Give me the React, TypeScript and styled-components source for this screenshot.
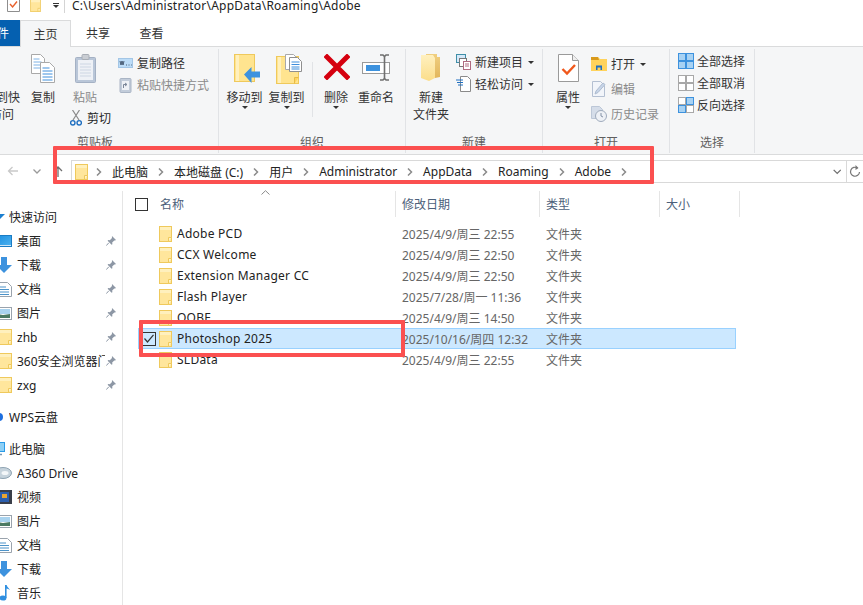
import React from "react";
import styled, { createGlobalStyle } from "styled-components";

const FONT = `"Noto Sans", "Noto Sans CJK SC", sans-serif`;

const GlobalStyle = createGlobalStyle`
  html, body {
    margin: 0;
    padding: 0;
    background: #fff;
  }
  body {
    font-family: ${FONT};
    font-size: 12px;
    color: #1f1f1f;
  }
`;

/* icons */

const FolderIcon = ({ w = 13, h = 16 }: { w?: number; h?: number }) => (
  <svg width={w} height={h} viewBox="0 0 13 16">
    <rect x="0.5" y="0.5" width="12" height="15" fill="#ffe69c" stroke="#efc95c" />
    <rect x="1" y="1" width="11" height="3" fill="#fff0bd" />
    <path d="M9.5 15.5v-4h3" fill="#fff3c9" stroke="#efc95c" />
  </svg>
);

const QuickCheck = () => (
  <svg width="14" height="13" viewBox="0 0 14 13">
    <path d="M0.5 0v12.5h12V0" fill="#fff" stroke="#8e8e8e" />
    <path d="M3 5l2.6 3L10 2.5" fill="none" stroke="#e8602c" strokeWidth="1.4" />
  </svg>
);

const DocCopy = () => (
  <svg width="24" height="29" viewBox="0 0 24 29">
    <path d="M0.5 0.5h9l4 4v15h-13z" fill="#fff" stroke="#a9a9a9" />
    <path d="M2.5 5h6M2.5 8h8M2.5 11h8M2.5 14h8" stroke="#7fb2e5" />
    <path d="M9.5 8.5h9l5 5v15h-14z" fill="#fff" stroke="#a9a9a9" />
    <path d="M11.5 14h7M11.5 17h10M11.5 20h10M11.5 23h10M11.5 26h10" stroke="#3f8fdc" />
  </svg>
);

const PasteIcon = () => (
  <svg width="21" height="29" viewBox="0 0 21 29">
    <rect x="0.5" y="3.5" width="20" height="25" rx="1" fill="#b9c6d8" stroke="#a4b1c4" />
    <rect x="3" y="6" width="15" height="20" fill="#eef1f6" />
    <path d="M5 10h11M5 13h11M5 16h11M5 19h11M5 22h11" stroke="#cdd6e3" />
    <rect x="7" y="0.5" width="7" height="5" rx="1" fill="#c9cdd3" stroke="#a8adb5" />
  </svg>
);

const ScissorsIcon = () => (
  <svg width="12" height="16" viewBox="0 0 12 16">
    <path d="M3 10L9.5 0M9 10L2.5 0" stroke="#8a8a8a" strokeWidth="1.2" fill="none" />
    <circle cx="2.8" cy="12.8" r="2.2" fill="none" stroke="#1f6fc0" strokeWidth="1.4" />
    <circle cx="9.2" cy="12.8" r="2.2" fill="none" stroke="#1f6fc0" strokeWidth="1.4" />
  </svg>
);

const CopyPathIcon = () => (
  <svg width="15" height="10" viewBox="0 0 15 10">
    <rect x="0.5" y="0.5" width="14" height="9" fill="#bcdcf7" stroke="#a3c6e6" />
    <path d="M2 3l1 4 1-4 1 4 1-4M8 7h1M10.5 7h1M13 7h0.8" stroke="#2c3e55" fill="none" strokeWidth="0.8" />
  </svg>
);

const ShortcutIcon = () => (
  <svg width="12" height="16" viewBox="0 0 12 16">
    <rect x="0.5" y="1.5" width="11" height="14" rx="1" fill="#c2ccda" stroke="#aab5c5" />
    <rect x="2.5" y="4" width="7" height="9" fill="#eef1f6" />
    <path d="M4 11V7.5h3M5.5 6l2 1.5-2 1.5" stroke="#7a8699" fill="none" />
  </svg>
);

const MoveToIcon = () => (
  <svg width="26" height="29" viewBox="0 0 26 29">
    <rect x="0.5" y="0.5" width="20" height="27" fill="#ffe48f" stroke="#efc95c" />
    <rect x="2" y="1" width="3" height="26" fill="#fff0bd" />
    <path d="M10 20.5L17.5 13v4.5H26v6h-8.500V29z" fill="#3d92de" />
  </svg>
);

const CopyToIcon = () => (
  <svg width="26" height="30" viewBox="0 0 26 30">
    <rect x="0.5" y="2.5" width="22" height="27" fill="#ffe48f" stroke="#efc95c" />
    <rect x="2" y="3" width="3" height="26" fill="#fff0bd" />
    <path d="M18.5 29.500v-6h4" fill="#ffd45e" stroke="#e8bb45" />
    <path d="M9.500 0.500h8l3 3v12h-11z" fill="#fff" stroke="#a9a9a9" />
    <path d="M13.500 3.500h8l4 4v10h-12z" fill="#fff" stroke="#8f8f8f" />
    <path d="M15.500 8h8M15.500 10.500h8M15.500 13h8M15.500 15h8" stroke="#3f8fdc" />
  </svg>
);

const DeleteIcon = () => (
  <svg width="26" height="26" viewBox="0 0 26 26">
    <path d="M3 3l20 20M23 3L3 23" stroke="#d5000f" strokeWidth="5" strokeLinecap="square" />
  </svg>
);

const RenameIcon = () => (
  <svg width="29" height="27" viewBox="0 0 29 27">
    <rect x="0.5" y="8.5" width="27" height="11" fill="#fff" stroke="#9a9a9a" />
    <rect x="4" y="11" width="14" height="6" fill="#3d92de" />
    <path d="M18 1h3l1.500 1.500L24 1h3M22.500 2v23M18 26h3l1.500-1.500L24 26h3" fill="none" stroke="#6f6f6f" strokeWidth="1.6" />
  </svg>
);

const NewFolderIcon = () => (
  <svg width="20" height="27" viewBox="0 0 20 27">
    <defs>
      <linearGradient id="newFolderFront" x1="0" y1="0" x2="0" y2="1">
        <stop offset="0" stopColor="#fff0bf" />
        <stop offset="1" stopColor="#fbdd8a" />
      </linearGradient>
      <linearGradient id="newFolderBack" x1="0" y1="0" x2="0" y2="1">
        <stop offset="0" stopColor="#f0cf80" />
        <stop offset="1" stopColor="#e2b65c" />
      </linearGradient>
    </defs>
    <path d="M5 0h11v3h3v20l-5 1H5z" fill="url(#newFolderBack)" />
    <path d="M0 1h12l2 3v20l-6 3-8-3z" fill="url(#newFolderFront)" />
  </svg>
);

const NewItemIcon = () => (
  <svg width="15" height="16" viewBox="0 0 15 16">
    <rect x="0.5" y="0.5" width="9" height="8" fill="#d5e8f8" stroke="#3f8fa8" />
    <rect x="3.500" y="4.500" width="7" height="8" fill="#fff" stroke="#777" />
    <rect x="7.500" y="7.500" width="7" height="8" fill="#fff" stroke="#b06a80" />
    <path d="M9 10h4M9 12h4" stroke="#b06a80" />
  </svg>
);

const EasyAccessIcon = () => (
  <svg width="15" height="16" viewBox="0 0 15 16">
    <path d="M4.500 0.500h7l3 3v12h-10z" fill="#fff" stroke="#8a8a8a" />
    <path d="M0 4h7M1 6.500h6M2 9h5" stroke="#1f6fc0" />
  </svg>
);

const PropertiesIcon = () => (
  <svg width="21" height="28" viewBox="0 0 21 28">
    <path d="M0.500 0.500h14l6 6v21h-20z" fill="#fff" stroke="#9a9a9a" />
    <path d="M14.500 0.500v6h6" fill="#eee" stroke="#9a9a9a" />
    <path d="M4.500 15l4.500 4.500L17 11" fill="none" stroke="#f0581c" strokeWidth="2.4" />
  </svg>
);

const OpenIcon = () => (
  <svg width="16" height="14" viewBox="0 0 16 14">
    <path d="M0 0h7l2 2h7v12H0z" fill="#ffd35c" />
    <path d="M0 0h7l1 3H0z" fill="#d99a1c" />
    <path d="M5 13V8.500h6V13H9.500v-2.500h-3V13z" fill="#1f6fc0" />
  </svg>
);

const EditIcon = () => (
  <svg width="14" height="16" viewBox="0 0 14 16">
    <path d="M0.500 0.500h8l4 4v11H0.500z" fill="#f2f5fa" stroke="#b4c0d2" />
    <path d="M3 13l1-3 7-8 2 1.500-7 8z" fill="#c7d5e8" stroke="#aebcd0" />
  </svg>
);

const HistoryIcon = () => (
  <svg width="16" height="16" viewBox="0 0 16 16">
    <path d="M0.500 0.500h8l3 3v9H0.500z" fill="#d5dde9" stroke="#bcc7d7" />
    <circle cx="10" cy="10" r="5.500" fill="#eef1f6" stroke="#9fabbc" />
    <path d="M10 7v3l2 1" fill="none" stroke="#8492a6" />
  </svg>
);

const GridIcon = ({ on }: { on: boolean[] }) => (
  <svg width="16" height="16" viewBox="0 0 16 16">
    {[0, 1, 2, 3].map((i) => (
      <rect
        key={i}
        x={i % 2 === 0 ? 0.5 : 8.5}
        y={i < 2 ? 0.5 : 8.5}
        width="7"
        height="7"
        fill={on[i] ? "#a8d2f3" : "#fff"}
        stroke={on[i] ? "#3d92de" : "#a8a8a8"}
      />
    ))}
  </svg>
);

const Pin = () => (
  <svg width="10" height="10" viewBox="0 0 10 10">
    <path d="M6 0l4 4-1 .6-.7-.2L6.200 6.600l.2 1.600-.8.6-4-4 .7-.8 1.500.2 2.200-2.200-.1-.8z" fill="#8d97a5" />
    <path d="M2.800 6.800L0.300 9.600" stroke="#8d97a5" />
  </svg>
);

const CrumbArrow = () => (
  <svg width="6" height="8" viewBox="0 0 6 8">
    <path d="M1 0.500L4.500 4 1 7.500" fill="none" stroke="#8a8a8a" strokeWidth="1.5" />
  </svg>
);

const Caret = () => (
  <svg width="6" height="3" viewBox="0 0 6 3">
    <path d="M0 0h6L3 3z" fill="#333" />
  </svg>
);

const DesktopIcon = () => (
  <svg width="16" height="12" viewBox="0 0 16 12">
    <defs>
      <linearGradient id="desktopFill" x1="0" y1="0" x2="1" y2="1">
        <stop offset="0" stopColor="#1b8ee0" />
        <stop offset="1" stopColor="#4fb4f0" />
      </linearGradient>
    </defs>
    <rect x="0.500" y="0.500" width="15" height="11" fill="url(#desktopFill)" stroke="#1a7cc4" />
    <path d="M1 10.500h14" stroke="#cfe6f7" />
  </svg>
);

const DownloadIcon = () => (
  <svg width="16" height="16" viewBox="0 0 16 16">
    <path d="M5 0h6v8h5l-8 8-8-8h5z" fill="#3d92de" />
  </svg>
);

const DocsIcon = () => (
  <svg width="16" height="15" viewBox="0 0 16 15">
    <path d="M0.500 0.500h11l4 4v10H0.500z" fill="#fff" stroke="#9aa3ad" />
    <path d="M3 5h7M3 7.500h10M3 10h10M3 12.500h10" stroke="#4c93c9" />
  </svg>
);

const PicturesIcon = () => (
  <svg width="16" height="13" viewBox="0 0 16 13">
    <rect x="0.500" y="0.500" width="15" height="12" fill="#fff" stroke="#9aa3ad" />
    <rect x="2" y="2" width="12" height="5" fill="#a9d3ef" />
    <path d="M2 7l5 1 7-1v4H2z" fill="#4b7a63" />
  </svg>
);

const VideoIcon = () => (
  <svg width="16" height="14" viewBox="0 0 16 14">
    <rect width="16" height="14" fill="#3a3f4a" />
    <rect x="3" y="2" width="10" height="10" fill="#2c5fae" />
    <rect x="6" y="4" width="5" height="4" fill="#e9a531" />
  </svg>
);

const MusicIcon = () => (
  <svg width="16" height="16" viewBox="0 0 16 16">
    <path d="M9 0h1.600c.3 2 2.400 3 3.400 5-1.200-1-2.600-1.500-3.400-1.600V13H9z" fill="#2f8fe0" />
    <ellipse cx="7" cy="13" rx="3.400" ry="2.600" fill="#2f8fe0" />
  </svg>
);

const DriveIcon = () => (
  <svg width="18" height="14" viewBox="0 0 18 14">
    <ellipse cx="9" cy="7" rx="8.500" ry="5.500" fill="#c6d3dc" stroke="#8ea3b2" />
    <ellipse cx="11" cy="7" rx="3.500" ry="2" fill="#f4f7f9" />
  </svg>
);

const QuickMark = () => (
  <svg width="10" height="6" viewBox="0 0 10 6">
    <path d="M0 0h10L5 5z" fill="#1b7fd0" />
  </svg>
);

const WpsDot = () => (
  <svg width="12" height="12" viewBox="0 0 12 12">
    <circle cx="6" cy="6" r="4" fill="#1e6fe0" />
  </svg>
);

const PcIcon = () => (
  <svg width="14" height="14" viewBox="0 0 14 14">
    <rect x="0.500" y="0.500" width="13" height="9" fill="#8fd0f5" stroke="#2a9be8" />
    <path d="M3 12.500h8" stroke="#7a9ab5" strokeWidth="1.5" />
  </svg>
);

/* title bar */

const Window = styled.div`
  width: 863px;
  height: 605px;
  overflow: hidden;
  display: flex;
  flex-direction: column;
  background: #fff;
`;

const TitleBar = styled.div`
  height: 20px;
  flex: none;
  overflow: hidden;
`;

const TitleInner = styled.div`
  margin-top: -1px;
  height: 13px;
  display: flex;
  align-items: center;
  padding-left: 7px;
`;

const TitleCaret = styled.span`
  margin-left: 10px;
  width: 8px;
  display: flex;
  flex-direction: column;
  align-items: center;
  gap: 1px;

  &::before {
    content: "";
    width: 6px;
    height: 1px;
    background: #333;
  }
`;

const TitleSep = styled.span`
  width: 1px;
  height: 14px;
  margin: 0 7px 0 4px;
  background: #d4d4d4;
`;

const TitleFolderSlot = styled.span`
  display: flex;
  margin-left: 8px;
`;

const PathText = styled.span`
  font-size: 12px;
  line-height: 13px;
  letter-spacing: 0.22px;
  color: #222;
`;

/* tabs */

const TabBar = styled.div`
  height: 27px;
  flex: none;
  display: flex;
  box-sizing: border-box;
  border-bottom: 1px solid #dadbdc;
`;

const FileTab = styled.div`
  width: 20px;
  height: 26px;
  box-sizing: border-box;
  padding-right: 11px;
  background: #0560b0;
  color: #fff;
  display: flex;
  align-items: center;
  justify-content: flex-end;
  overflow: hidden;
  white-space: nowrap;
`;

const Tab = styled.div<{ $active?: boolean; $w: number }>`
  width: ${(p) => p.$w}px;
  height: 26px;
  box-sizing: border-box;
  display: flex;
  align-items: center;
  justify-content: center;
  font-size: 12px;
  color: #333;
  ${(p) =>
    p.$active
      ? `
    height: 27px;
    background: #f5f6f7;
    border: 1px solid #dadbdc;
    border-bottom: none;
  `
      : ""}
`;

/* ribbon */

const Ribbon = styled.div`
  height: 108px;
  flex: none;
  display: flex;
  box-sizing: border-box;
  background: #f5f6f7;
  border-bottom: 1px solid #dadbdc;
  overflow: hidden;
`;

const Group = styled.section<{ $w: number; $shift?: number }>`
  width: ${(p) => p.$w}px;
  margin-left: ${(p) => p.$shift ?? 0}px;
  flex: none;
  box-sizing: border-box;
  border-right: 1px solid #e1e3e6;
  margin-top: 2px;
  margin-bottom: 1px;
  display: flex;
  flex-direction: column;
`;

const GroupBody = styled.div<{ $pad?: number }>`
  height: 86px;
  padding-left: ${(p) => p.$pad ?? 0}px;
  display: flex;
`;

const GroupLabel = styled.div`
  text-align: center;
  color: #5f5f5f;
  font-size: 12px;
  line-height: 16px;
`;

const BigButton = styled.div<{ $w: number }>`
  width: ${(p) => p.$w}px;
  flex: none;
  display: flex;
  flex-direction: column;
  align-items: center;
  padding-top: 5px;
`;

const BigIcon = styled.div<{ $nudge?: number }>`
  height: 33px;
  margin-left: ${(p) => p.$nudge ?? 0}px;
  display: flex;
  align-items: flex-start;
  justify-content: center;
`;

const BigLabel = styled.div<{ $muted?: boolean }>`
  margin-top: 2px;
  font-size: 12px;
  line-height: 17px;
  text-align: center;
  white-space: nowrap;
  color: ${(p) => (p.$muted ? "#8a8a8a" : "#333")};
`;

const DropCaret = styled.div`
  display: flex;
  justify-content: center;
`;

const PasteColumn = styled.div`
  width: 48px;
  flex: none;
  display: flex;
  flex-direction: column;
`;

const CutRow = styled.div`
  margin: 3px 0 0 4px;
  display: flex;
  align-items: center;
  gap: 5px;
  white-space: nowrap;
`;

const SmallColumn = styled.div<{ $gap: number; $left: number; $top: number }>`
  margin-left: ${(p) => p.$left}px;
  padding-top: ${(p) => p.$top}px;
  display: flex;
  flex-direction: column;
  gap: ${(p) => p.$gap}px;
`;

const SmallRow = styled.div<{ $muted?: boolean; $iconW: number; $gap?: number }>`
  height: 16px;
  display: flex;
  align-items: center;
  gap: ${(p) => p.$gap ?? 4}px;
  white-space: nowrap;
  font-size: 12px;
  color: ${(p) => (p.$muted ? "#8a8a8a" : "#333")};

  & > svg:first-child {
    width: ${(p) => p.$iconW}px;
  }
`;

const RowCaret = styled.span`
  display: flex;
  margin-left: 1px;
`;

const GroupDivider = styled.div`
  width: 1px;
  height: 55px;
  margin: 13px 5px 0;
  background: #e1e3e6;
`;

/* address bar */

const NavRow = styled.div`
  height: 32px;
  flex: none;
  display: flex;
  align-items: flex-start;
  padding-top: 5px;
  box-sizing: border-box;
`;

const NavButtons = styled.div`
  width: 71px;
  height: 22px;
  flex: none;
  display: flex;
  align-items: center;
`;

const NavSlot = styled.span<{ $w: number }>`
  width: ${(p) => p.$w}px;
  display: flex;
  justify-content: center;
  flex: none;
`;

const AddressBox = styled.div`
  width: 800px;
  height: 23px;
  flex: none;
  box-sizing: border-box;
  border: 1px solid #d9d9d9;
  display: flex;
  align-items: center;
  padding-left: 3px;
`;

const Crumbs = styled.div`
  flex: 1;
  display: flex;
  align-items: center;
  gap: 10px;
  font-size: 12px;
  color: #222;
  white-space: nowrap;

  & > svg:first-child {
    margin-right: -2px;
  }
`;

const AddressEnd = styled.div`
  width: 37px;
  height: 21px;
  flex: none;
  display: flex;
  align-items: center;
`;

const Refresh = styled.div`
  width: 22px;
  height: 21px;
  margin-left: 5px;
  border-left: 1px solid #d9d9d9;
  display: flex;
  align-items: center;
  padding-left: 2px;
`;

/* body */

const Body = styled.div`
  flex: 1;
  display: flex;
  min-height: 0;
`;

const Sidebar = styled.aside`
  width: 123px;
  flex: none;
  box-sizing: border-box;
  border-right: 1px solid #e5e5e5;
  padding-top: 14px;
  margin-top: 4px;
  overflow: hidden;
`;

const SideRow = styled.div<{ $gapTop?: number }>`
  height: 24px;
  margin-top: ${(p) => p.$gapTop ?? 0}px;
  display: flex;
  align-items: center;
  white-space: nowrap;
  font-size: 12px;
  color: #222;
`;

const SideIconSlot = styled.span<{ $top?: boolean }>`
  width: ${(p) => (p.$top ? 9 : 17)}px;
  height: 24px;
  flex: none;
  overflow: hidden;
  display: flex;
  align-items: center;
  justify-content: flex-end;

  & > svg {
    flex: none;
    margin-right: ${(p) => (p.$top ? 4 : 5)}px;
  }
`;

const SideText = styled.span<{ $limit?: boolean }>`
  width: ${(p) => (p.$limit ? "88px" : "auto")};
  overflow: hidden;
  flex: ${(p) => (p.$limit ? "none" : "0 0 auto")};
`;

const SidePin = styled.span`
  margin-left: auto;
  margin-right: 6px;
  display: flex;
`;

const Main = styled.main`
  flex: 1;
  min-width: 0;
  padding: 4px 0 0 15px;
`;

const HeaderRow = styled.div`
  height: 26px;
  margin-left: -3px;
  display: grid;
  grid-template-columns: 261px 144px 120px 80px;
  color: #4c607a;
  font-size: 12px;
  position: relative;
`;

const HeadCell = styled.div<{ $pad: number }>`
  box-sizing: border-box;
  border-right: 1px solid #e5e5e5;
  padding-left: ${(p) => p.$pad}px;
  display: flex;
  align-items: center;
  gap: 12px;
`;

const HeadCheck = styled.span`
  width: 11px;
  height: 11px;
  border: 1px solid #333;
  flex: none;
`;

const SortArrow = styled.span`
  position: absolute;
  left: 126px;
  top: -1px;
  display: flex;
`;

const FileList = styled.div`
  padding-top: 6px;
`;

const FileRow = styled.div<{ $selected?: boolean }>`
  width: 598px;
  height: 21px;
  box-sizing: border-box;
  display: grid;
  grid-template-columns: 21px 18px 225px 144px 1fr;
  align-items: center;
  font-size: 12px;
  color: #666;
  background: ${(p) => (p.$selected ? "#cce8ff" : "transparent")};
  outline: ${(p) => (p.$selected ? "1px solid #99d1ff" : "none")};
  outline-offset: -1px;
`;

const RowCheck = styled.span`
  width: 12px;
  height: 12px;
  margin-left: 4px;
  border: 1px solid #333;
  display: flex;
  align-items: center;
  justify-content: center;
`;

const RowIcon = styled.span`
  display: flex;
`;

const NameCell = styled.span`
  color: #222;
  letter-spacing: 0.25px;
  white-space: nowrap;
`;

const DateCell = styled.span`
  white-space: nowrap;
`;

const Annotation = styled.div<{ $x: number; $y: number; $w: number; $h: number }>`
  position: absolute;
  left: ${(p) => p.$x}px;
  top: ${(p) => p.$y}px;
  width: ${(p) => p.$w}px;
  height: ${(p) => p.$h}px;
  box-sizing: border-box;
  border: 4px solid #fb5050;
  border-radius: 1px;
  pointer-events: none;
`;

const Stage = styled.div`
  position: relative;
  width: 863px;
  height: 605px;
  overflow: hidden;
`;

/* data */

const crumbs = ["此电脑", "本地磁盘 (C:)", "用户", "Administrator", "AppData", "Roaming", "Adobe"];

const files = [
  { name: "Adobe PCD", date: "2025/4/9/周三 22:55" },
  { name: "CCX Welcome", date: "2025/4/9/周三 22:50" },
  { name: "Extension Manager CC", date: "2025/4/9/周三 22:50" },
  { name: "Flash Player", date: "2025/7/28/周一 11:36" },
  { name: "OOBE", date: "2025/4/9/周三 14:50" },
  { name: "Photoshop 2025", date: "2025/10/16/周四 12:32", selected: true },
  { name: "SLData", date: "2025/4/9/周三 22:55" },
];

const SideItem = ({
  icon,
  label,
  pinned,
  limit,
}: {
  icon: React.ReactNode;
  label: string;
  pinned?: boolean;
  limit?: boolean;
}) => (
  <SideRow>
    <SideIconSlot>{icon}</SideIconSlot>
    <SideText $limit={limit}>{label}</SideText>
    {pinned && (
      <SidePin>
        <Pin />
      </SidePin>
    )}
  </SideRow>
);

export default function App() {
  return (
    <Stage>
      <GlobalStyle />
      <Window>
        <TitleBar>
          <TitleInner>
            <QuickCheck />
            <TitleFolderSlot>
              <FolderIcon w={13} h={13} />
            </TitleFolderSlot>
            <TitleCaret>
              <Caret />
            </TitleCaret>
            <TitleSep />
            <PathText>C:\Users\Administrator\AppData\Roaming\Adobe</PathText>
          </TitleInner>
        </TitleBar>

        <TabBar>
          <FileTab>文件</FileTab>
          <Tab $active $w={51}>
            主页
          </Tab>
          <Tab $w={54}>共享</Tab>
          <Tab $w={53}>查看</Tab>
        </TabBar>

        <Ribbon>
          <Group $w={247} $shift={-28}>
            <GroupBody>
              <BigButton $w={48}>
                <BigIcon />
                <BigLabel>
                  固定到快
                  <br />
                  速访问
                </BigLabel>
              </BigButton>
              <BigButton $w={46}>
                <BigIcon>
                  <DocCopy />
                </BigIcon>
                <BigLabel>复制</BigLabel>
              </BigButton>
              <PasteColumn>
                <BigButton $w={38}>
                  <BigIcon>
                    <PasteIcon />
                  </BigIcon>
                  <BigLabel $muted>粘贴</BigLabel>
                </BigButton>
                <CutRow>
                  <ScissorsIcon />
                  剪切
                </CutRow>
              </PasteColumn>
              <SmallColumn $gap={6} $left={4} $top={6}>
                <SmallRow $iconW={15}>
                  <CopyPathIcon />
                  复制路径
                </SmallRow>
                <SmallRow $muted $iconW={15}>
                  <ShortcutIcon />
                  粘贴快捷方式
                </SmallRow>
              </SmallColumn>
            </GroupBody>
            <GroupLabel>剪贴板</GroupLabel>
          </Group>

          <Group $w={187}>
            <GroupBody $pad={4}>
              <BigButton $w={43}>
                <BigIcon $nudge={5}>
                  <MoveToIcon />
                </BigIcon>
                <BigLabel>移动到</BigLabel>
                <DropCaret>
                  <Caret />
                </DropCaret>
              </BigButton>
              <BigButton $w={41}>
                <BigIcon $nudge={5}>
                  <CopyToIcon />
                </BigIcon>
                <BigLabel>复制到</BigLabel>
                <DropCaret>
                  <Caret />
                </DropCaret>
              </BigButton>
              <GroupDivider />
              <BigButton $w={36}>
                <BigIcon $nudge={2}>
                  <DeleteIcon />
                </BigIcon>
                <BigLabel>删除</BigLabel>
                <DropCaret>
                  <Caret />
                </DropCaret>
              </BigButton>
              <BigButton $w={44}>
                <BigIcon>
                  <RenameIcon />
                </BigIcon>
                <BigLabel>重命名</BigLabel>
              </BigButton>
            </GroupBody>
            <GroupLabel>组织</GroupLabel>
          </Group>

          <Group $w={137}>
            <GroupBody $pad={3}>
              <BigButton $w={44}>
                <BigIcon>
                  <NewFolderIcon />
                </BigIcon>
                <BigLabel>
                  新建
                  <br />
                  文件夹
                </BigLabel>
              </BigButton>
              <SmallColumn $gap={6} $left={3} $top={5}>
                <SmallRow $iconW={15}>
                  <NewItemIcon />
                  新建项目
                  <RowCaret>
                    <Caret />
                  </RowCaret>
                </SmallRow>
                <SmallRow $iconW={15}>
                  <EasyAccessIcon />
                  轻松访问
                  <RowCaret>
                    <Caret />
                  </RowCaret>
                </SmallRow>
              </SmallColumn>
            </GroupBody>
            <GroupLabel>新建</GroupLabel>
          </Group>

          <Group $w={127}>
            <GroupBody $pad={5}>
              <BigButton $w={40}>
                <BigIcon>
                  <PropertiesIcon />
                </BigIcon>
                <BigLabel>属性</BigLabel>
                <DropCaret>
                  <Caret />
                </DropCaret>
              </BigButton>
              <SmallColumn $gap={9} $left={3} $top={7}>
                <SmallRow $iconW={16}>
                  <OpenIcon />
                  打开
                  <RowCaret>
                    <Caret />
                  </RowCaret>
                </SmallRow>
                <SmallRow $muted $iconW={16}>
                  <EditIcon />
                  编辑
                </SmallRow>
                <SmallRow $muted $iconW={16}>
                  <HistoryIcon />
                  历史记录
                </SmallRow>
              </SmallColumn>
            </GroupBody>
            <GroupLabel>打开</GroupLabel>
          </Group>

          <Group $w={85}>
            <GroupBody $pad={8}>
              <SmallColumn $gap={6} $left={0} $top={4}>
                <SmallRow $iconW={16} $gap={3}>
                  <GridIcon on={[true, true, true, true]} />
                  全部选择
                </SmallRow>
                <SmallRow $iconW={16} $gap={3}>
                  <GridIcon on={[false, false, false, false]} />
                  全部取消
                </SmallRow>
                <SmallRow $iconW={16} $gap={3}>
                  <GridIcon on={[false, true, true, false]} />
                  反向选择
                </SmallRow>
              </SmallColumn>
            </GroupBody>
            <GroupLabel>选择</GroupLabel>
          </Group>
        </Ribbon>

        <NavRow>
          <NavButtons>
            <NavSlot $w={26}>
              <svg width="12" height="10" viewBox="0 0 12 10">
                <path d="M11 5H1.500M5.500 1L1.500 5l4 4" fill="none" stroke="#c9c9c9" strokeWidth="1.3" />
              </svg>
            </NavSlot>
            <NavSlot $w={22}>
              <svg width="8" height="5" viewBox="0 0 8 5">
                <path d="M0.500 0.500L4 4l3.500-3.500" fill="none" stroke="#9a9a9a" strokeWidth="1.3" />
              </svg>
            </NavSlot>
            <NavSlot $w={20}>
              <svg width="10" height="11" viewBox="0 0 10 11">
                <path d="M5 11V1M1 5l4-4 4 4" fill="none" stroke="#6f6f6f" strokeWidth="1.3" />
              </svg>
            </NavSlot>
          </NavButtons>
          <AddressBox>
            <Crumbs>
              <FolderIcon w={13} h={16} />
              <CrumbArrow />
              {crumbs.map((c) => (
                <React.Fragment key={c}>
                  <span>{c}</span>
                  <CrumbArrow />
                </React.Fragment>
              ))}
            </Crumbs>
            <AddressEnd>
              <svg width="9" height="6" viewBox="0 0 9 6">
                <path d="M0.700 0.700L4.500 4.500l3.800-3.800" fill="none" stroke="#6f6f6f" strokeWidth="1.4" />
              </svg>
              <Refresh>
                <svg width="12" height="13" viewBox="0 0 12 13">
                  <path d="M10.500 7a4.500 4.500 0 1 1-2-4" fill="none" stroke="#777" strokeWidth="1.2" />
                  <path d="M6.500 0l3 3-3 2z" fill="#777" />
                </svg>
              </Refresh>
            </AddressEnd>
          </AddressBox>
        </NavRow>

        <Body>
          <Sidebar>
            <SideRow>
              <SideIconSlot $top>
                <QuickMark />
              </SideIconSlot>
              <SideText>快速访问</SideText>
            </SideRow>
            <SideItem icon={<DesktopIcon />} label="桌面" pinned />
            <SideItem icon={<DownloadIcon />} label="下载" pinned />
            <SideItem icon={<DocsIcon />} label="文档" pinned />
            <SideItem icon={<PicturesIcon />} label="图片" pinned />
            <SideItem icon={<FolderIcon />} label="zhb" pinned />
            <SideItem icon={<FolderIcon />} label="360安全浏览器门" pinned limit />
            <SideItem icon={<FolderIcon />} label="zxg" pinned />
            <SideRow $gapTop={8}>
              <SideIconSlot $top>
                <WpsDot />
              </SideIconSlot>
              <SideText>WPS云盘</SideText>
            </SideRow>
            <SideRow $gapTop={8}>
              <SideIconSlot $top>
                <PcIcon />
              </SideIconSlot>
              <SideText>此电脑</SideText>
            </SideRow>
            <SideItem icon={<DriveIcon />} label="A360 Drive" />
            <SideItem icon={<VideoIcon />} label="视频" />
            <SideItem icon={<PicturesIcon />} label="图片" />
            <SideItem icon={<DocsIcon />} label="文档" />
            <SideItem icon={<DownloadIcon />} label="下载" />
            <SideItem icon={<MusicIcon />} label="音乐" />
          </Sidebar>

          <Main>
            <HeaderRow>
              <SortArrow>
                <svg width="9" height="5" viewBox="0 0 9 5">
                  <path d="M0.500 4.500L4.500 0.700l4 3.800" fill="none" stroke="#8a8a8a" />
                </svg>
              </SortArrow>
              <HeadCell $pad={0}>
                <HeadCheck />
                名称
              </HeadCell>
              <HeadCell $pad={6}>修改日期</HeadCell>
              <HeadCell $pad={6}>类型</HeadCell>
              <HeadCell $pad={6}>大小</HeadCell>
            </HeaderRow>
            <FileList>
              {files.map((f) => (
                <FileRow key={f.name} $selected={f.selected}>
                  {f.selected ? (
                    <RowCheck>
                      <svg width="10" height="9" viewBox="0 0 10 9">
                        <path d="M0.500 4.500L3.500 8 9.500 0.800" fill="none" stroke="#333" strokeWidth="1.2" />
                      </svg>
                    </RowCheck>
                  ) : (
                    <span />
                  )}
                  <RowIcon>
                    <FolderIcon />
                  </RowIcon>
                  <NameCell>{f.name}</NameCell>
                  <DateCell>{f.date}</DateCell>
                  <span>文件夹</span>
                </FileRow>
              ))}
            </FileList>
          </Main>
        </Body>
      </Window>
      <Annotation $x={53} $y={146} $w={601} $h={38} />
      <Annotation $x={139} $y={320} $w={266} $h={37} />
    </Stage>
  );
}
